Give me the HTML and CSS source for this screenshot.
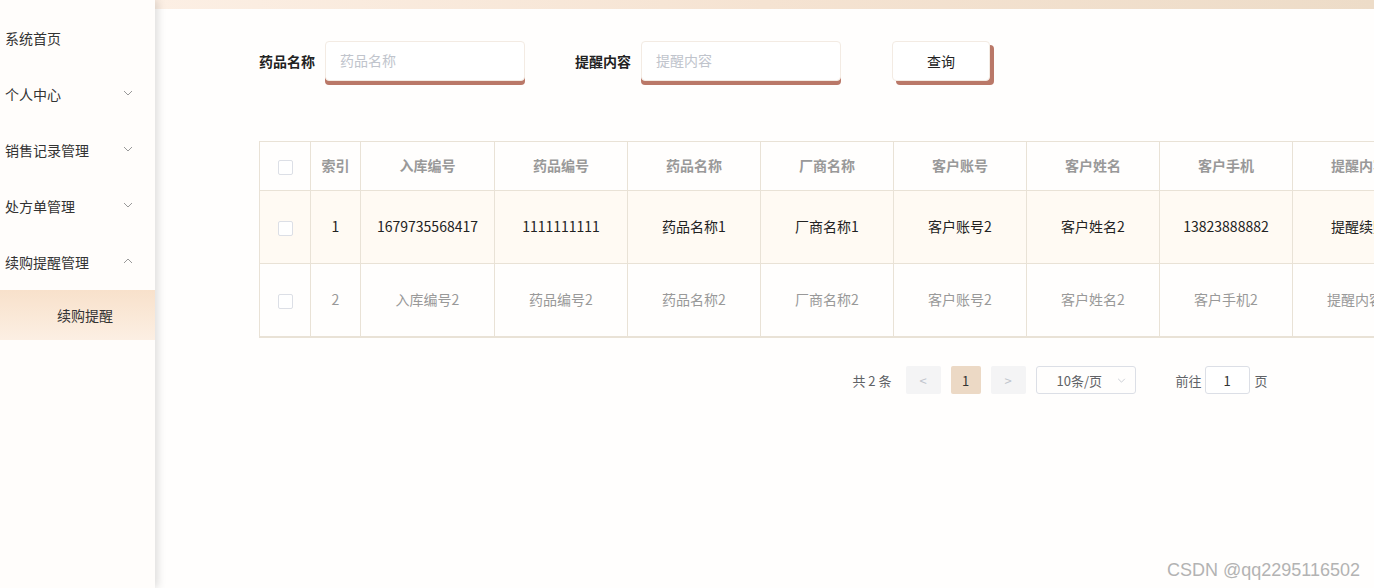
FILE: index.html
```html
<!DOCTYPE html>
<html lang="zh-CN">
<head>
    <meta charset="UTF-8">
    <title>续购提醒</title>
    <link rel="stylesheet" href="styles.css">
</head>
<body>
    <aside class="sidebar">
        <ul class="menu">
            <li class="menu-item"><span>系统首页</span></li>
            <li class="menu-item"><span>个人中心</span>
                <svg class="arrow" viewBox="0 0 10 6"><polyline points="1,1 5,5 9,1"/></svg></li>
            <li class="menu-item"><span>销售记录管理</span>
                <svg class="arrow" viewBox="0 0 10 6"><polyline points="1,1 5,5 9,1"/></svg></li>
            <li class="menu-item"><span>处方单管理</span>
                <svg class="arrow" viewBox="0 0 10 6"><polyline points="1,1 5,5 9,1"/></svg></li>
            <li class="menu-item"><span>续购提醒管理</span>
                <svg class="arrow" viewBox="0 0 10 6"><polyline points="1,5 5,1 9,5"/></svg></li>
            <li class="sub-item active">续购提醒</li>
        </ul>
    </aside>

    <main class="main">
        <div class="topbar"></div>

        <div class="content">
            <form class="search-form" onsubmit="return false">
                <label class="field">
                    <span class="field-label">药品名称</span>
                    <input class="field-input" type="text" placeholder="药品名称">
                </label>
                <label class="field">
                    <span class="field-label">提醒内容</span>
                    <input class="field-input" type="text" placeholder="提醒内容">
                </label>
                <button class="search-btn" type="submit">查询</button>
            </form>

            <div class="table-wrap">
                <table class="data-table">
                    <colgroup>
                        <col class="col-check"><col class="col-index"><col class="col-wide">
                        <col class="col-normal"><col class="col-normal"><col class="col-normal">
                        <col class="col-normal"><col class="col-normal"><col class="col-normal">
                        <col class="col-normal"><col class="col-time"><col class="col-action">
                    </colgroup>
                    <thead>
                        <tr>
                            <th><span class="checkbox"></span></th>
                            <th>索引</th>
                            <th>入库编号</th>
                            <th>药品编号</th>
                            <th>药品名称</th>
                            <th>厂商名称</th>
                            <th>客户账号</th>
                            <th>客户姓名</th>
                            <th>客户手机</th>
                            <th>提醒内容</th>
                            <th>提醒时间</th>
                            <th>操作</th>
                        </tr>
                    </thead>
                    <tbody>
                        <tr class="row-striped">
                            <td><span class="checkbox"></span></td>
                            <td>1</td>
                            <td>1679735568417</td>
                            <td>1111111111</td>
                            <td>药品名称1</td>
                            <td>厂商名称1</td>
                            <td>客户账号2</td>
                            <td>客户姓名2</td>
                            <td>13823888882</td>
                            <td>提醒续购</td>
                            <td>2023-03-25</td>
                            <td>详情</td>
                        </tr>
                        <tr class="row-muted">
                            <td><span class="checkbox"></span></td>
                            <td>2</td>
                            <td>入库编号2</td>
                            <td>药品编号2</td>
                            <td>药品名称2</td>
                            <td>厂商名称2</td>
                            <td>客户账号2</td>
                            <td>客户姓名2</td>
                            <td>客户手机2</td>
                            <td>提醒内容2</td>
                            <td>提醒时间2</td>
                            <td>详情</td>
                        </tr>
                    </tbody>
                </table>

                <div class="pagination">
                    <span class="total">共 2 条</span>
                    <button class="page-btn">&lt;</button>
                    <button class="page-num active">1</button>
                    <button class="page-btn">&gt;</button>
                    <div class="page-size">
                        <span>10条/页</span>
                        <svg class="size-arrow" viewBox="0 0 10 6"><polyline points="1,1 5,5 9,1"/></svg>
                    </div>
                    <span class="jump">前往<input class="jump-input" type="text" value="1">页</span>
                </div>
            </div>
        </div>

        <div class="watermark">CSDN @qq2295116502</div>
    </main>
</body>
</html>
```

FILE: styles.css
```css
html, body {
    height: 100%;
}

body {
    margin: 0;
    display: flex;
    overflow: hidden;
    font-family: "Noto Sans CJK SC", "Liberation Sans", sans-serif;
    font-size: 14px;
    color: #333;
    background-color: #fffefd;
}

/* sidebar */
.sidebar {
    width: 155px;
    flex-shrink: 0;
    background-color: #fffdfb;
    box-shadow: 3px 0 8px rgba(0, 0, 0, 0.13);
    position: relative;
    z-index: 2;
}

.menu {
    list-style: none;
    margin: 0;
    padding: 10px 0 0;
}

.menu-item {
    height: 56px;
    display: flex;
    align-items: center;
    justify-content: space-between;
    padding: 0 22px 0 5px;
    color: #333;
}

.arrow {
    width: 10px;
    height: 6px;
    fill: none;
    stroke: #999;
    stroke-width: 1;
    margin-top: -2px;
}

.sub-item {
    height: 50px;
    display: flex;
    align-items: center;
    padding-left: 57px;
    color: #333;
}

.sub-item.active {
    background: linear-gradient(to bottom, #f8e1cb, #fcefe3);
}

/* main */
.main {
    flex: 1;
    min-width: 0;
    position: relative;
    display: flex;
    flex-direction: column;
}

.topbar {
    height: 9px;
    flex-shrink: 0;
    background: linear-gradient(to right, #fcefe4, #f5e3d2 50%, #eddcc8);
}

.content {
    padding: 32px 0 0 104px;
}

.search-form {
    display: flex;
    align-items: center;
}

.field {
    display: flex;
    align-items: center;
    margin-right: 50px;
}

.field-label {
    font-weight: bold;
    color: #222;
    margin-right: 10px;
}

.field-input {
    width: 200px;
    height: 40px;
    box-sizing: border-box;
    border: 1px solid #f3ebe3;
    border-radius: 4px;
    padding: 0 14px 2px;
    background-color: #fff;
    font-family: inherit;
    font-size: 14px;
    color: #333;
    box-shadow: 0 4px 0 #ba7868;
    outline: none;
}

.field-input::placeholder {
    color: #c0c4cc;
}

.search-btn {
    width: 98px;
    height: 40px;
    margin-left: 1px;
    border: 1px solid #f3ebe3;
    border-radius: 4px;
    background-color: #fff;
    font-family: inherit;
    font-size: 14px;
    color: #222;
    box-shadow: 4px 4px 0 #ba7868;
    cursor: pointer;
}

/* table */
.table-wrap {
    width: 1602px;
    margin-top: 60px;
}

.data-table {
    width: 1602px;
    table-layout: fixed;
    border-collapse: collapse;
    border-top: 1px solid #e9e2d6;
    border-left: 1px solid #e9e2d6;
    border-bottom: 2px solid #e9e2d6;
}

.col-check { width: 51px; }
.col-index { width: 50px; }
.col-wide { width: 134px; }
.col-normal { width: 133px; }
.col-time { width: 200px; }
.col-action { width: 236px; }

.data-table th,
.data-table td {
    padding: 0 0 2px;
    border-right: 1px solid #e9e2d6;
    border-bottom: 1px solid #e9e2d6;
    text-align: center;
    white-space: nowrap;
    overflow: hidden;
}

.data-table th {
    height: 46px;
    color: #999;
    font-weight: bold;
    background-color: #fffefd;
}

.data-table td {
    height: 70px;
}

.row-striped td {
    background-color: #fffaf3;
    color: #222;
}

.row-muted td {
    color: #999;
}

.checkbox {
    display: inline-block;
    width: 13px;
    height: 13px;
    border: 1px solid #dcdfe6;
    border-radius: 2px;
    background-color: #fff;
    vertical-align: middle;
}

/* pagination */
.pagination {
    display: flex;
    align-items: center;
    justify-content: center;
    margin-top: 28px;
    font-size: 13px;
    color: #606266;
}

.total {
    margin-right: 14px;
}

.page-btn,
.page-num {
    height: 28px;
    min-width: 35px;
    border: none;
    border-radius: 2px;
    background-color: #f4f4f5;
    color: #c0c4cc;
    font-family: inherit;
    font-size: 13px;
    margin-right: 10px;
    padding: 0;
}

.page-num {
    min-width: 30px;
    color: #333;
}

.page-num.active {
    background-color: #ecd9c5;
}

.page-size {
    width: 100px;
    height: 28px;
    box-sizing: border-box;
    border: 1px solid #dcdfe6;
    border-radius: 3px;
    display: flex;
    align-items: center;
    justify-content: space-between;
    padding: 0 9px 0 20px;
    color: #606266;
}

.size-arrow {
    width: 9px;
    height: 5px;
    fill: none;
    stroke: #c0c4cc;
    stroke-width: 1;
}

.jump {
    margin-left: 40px;
    display: flex;
    align-items: center;
}

.jump-input {
    width: 45px;
    height: 28px;
    box-sizing: border-box;
    border: 1px solid #dcdfe6;
    border-radius: 3px;
    margin: 0 5px 0 3px;
    text-align: center;
    font-family: inherit;
    font-size: 13px;
    color: #333;
    outline: none;
}

.watermark {
    position: absolute;
    right: 14px;
    bottom: 7px;
    font-family: "Liberation Sans", sans-serif;
    font-size: 18px;
    color: #b3b3b3;
}
```
